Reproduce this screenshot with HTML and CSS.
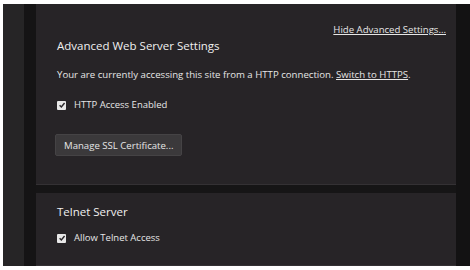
FILE: index.html
```html
<!DOCTYPE html>
<html>
<head>
<meta charset="utf-8">
<link rel="stylesheet" href="styles.css">
</head>
<body>
<div class="frame">
  <div class="sidebar"></div>
  <div class="gutter"></div>
  <div class="main">
    <section class="panel panel-adv">
      <div class="link-row"><a class="link" href="#">Hide Advanced Settings...</a></div>
      <h2 class="title">Advanced Web Server Settings</h2>
      <p class="text">Your are currently accessing this site from a HTTP connection. <a class="link" href="#">Switch to HTTPS</a>.</p>
      <label class="check"><span class="box"><svg viewBox="0 0 10 10" width="8" height="8"><path d="M2 5.2 L4.2 7.4 L8.2 2.6" fill="none" stroke="#2a272a" stroke-width="1.8"/></svg></span>HTTP Access Enabled</label>
      <button class="btn">Manage SSL Certificate...</button>
    </section>
    <section class="panel panel-telnet">
      <h2 class="title">Telnet Server</h2>
      <label class="check"><span class="box"><svg viewBox="0 0 10 10" width="8" height="8"><path d="M2 5.2 L4.2 7.4 L8.2 2.6" fill="none" stroke="#2a272a" stroke-width="1.8"/></svg></span>Allow Telnet Access</label>
    </section>
  </div>
  <div class="edge"></div>
</div>
</body>
</html>
```
FILE: styles.css
```css
html, body {
  margin: 0;
  padding: 0;
  background: #ffffff;
}
body {
  font-family: "Open Sans", "Liberation Sans", sans-serif;
  color: #e6e6e6;
  padding: 4px 0 4px 3px;
}
.frame {
  display: flex;
  height: 262px;
  background: #161516;
  overflow: hidden;
}
.sidebar {
  width: 21px;
  background: #262526;
}
.gutter {
  width: 12px;
  background: #151415;
}
.main {
  flex: 1;
  display: flex;
  flex-direction: column;
  gap: 8px;
}
.edge {
  width: 14px;
  background: #131213;
}
.panel {
  background: #272427;
  border-bottom: 1px solid #343134;
  padding: 0 10px 0 21px;
  box-sizing: border-box;
}
.panel-adv {
  height: 181px;
  padding-top: 19px;
}
.panel-telnet {
  flex: 1;
  padding-top: 11px;
}
.link-row {
  display: flex;
  justify-content: flex-end;
  height: 14px;
}
.link {
  color: #e6e6e6;
  text-decoration: underline;
  font-size: 9.6px;
}
.text .link {
  font-size: inherit;
}
.title {
  margin: 1px 0 0;
  font-size: 11.5px;
  font-weight: 400;
  line-height: 16px;
  color: #f0f0f0;
}
.panel-telnet .title {
  margin: 0;
}
.text {
  margin: 15px 0 0;
  font-size: 9.65px;
  line-height: 12px;
}
.check {
  display: flex;
  align-items: center;
  gap: 8px;
  font-size: 9.5px;
  line-height: 12px;
  margin-top: 18px;
}
.panel-telnet .check {
  margin-top: 12px;
}
.box {
  width: 9px;
  height: 9px;
  background: #e8e8e8;
  border-radius: 1px;
  display: flex;
  align-items: center;
  justify-content: center;
}
.btn {
  display: block;
  margin-top: 23px;
  margin-left: -2px;
  height: 22px;
  padding: 0 8px;
  background: #3b393b;
  border: 1px solid #454345;
  border-radius: 2px;
  color: #e6e6e6;
  font-family: inherit;
  font-size: 9.6px;
}
```
